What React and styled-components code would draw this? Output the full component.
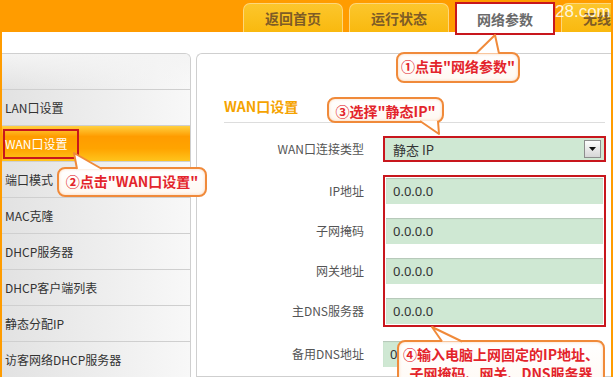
import styled, { createGlobalStyle } from "styled-components";

const GlobalStyle = createGlobalStyle`
  html, body {
    margin: 0;
    padding: 0;
    background: #fff;
  }
  body {
    font-family: "Noto Sans CJK SC", "Noto Sans", sans-serif;
  }
`;

const tabs = [
  { text: "返回首页" },
  { text: "运行状态" },
  { text: "网络参数", active: true },
  { text: "无线设置" },
];

const menu = [
  "LAN口设置",
  "WAN口设置",
  "端口模式",
  "MAC克隆",
  "DHCP服务器",
  "DHCP客户端列表",
  "静态分配IP",
  "访客网络DHCP服务器",
];

const ipFields = ["IP地址", "子网掩码", "网关地址", "主DNS服务器"];

function Callout({ top, left, width, height, tail, children }) {
  return (
    <CalloutBox style={{ top, left, width, height }}>
      {children}
      <TailSvg width="1" height="1">
        <path d={tail} fill="#fff" stroke="#f08a3a" strokeWidth="2" strokeLinejoin="round" />
      </TailSvg>
    </CalloutBox>
  );
}

function App() {
  return (
    <Page>
      <GlobalStyle />
      <TopBar>
        {tabs.map((t) => (
          <Tab key={t.text} $active={t.active}>
            {t.text}
          </Tab>
        ))}
        <Watermark>28.com</Watermark>
      </TopBar>

      <Body>
        <Sidebar>
          <SideHead />
          {menu.map((m) => (
            <MenuItem key={m} $active={m === "WAN口设置"}>
              {m === "WAN口设置" ? <Marked>{m}</Marked> : m}
            </MenuItem>
          ))}
        </Sidebar>

        <Panel>
          <Heading>WAN口设置</Heading>
          <Form>
            <Row>
              <Label>WAN口连接类型</Label>
              <Select>
                静态 IP
                <DropBtn>
                  <svg width="7" height="4" viewBox="0 0 7 4">
                    <path d="M0 0h7L3.5 4z" fill="#111" />
                  </svg>
                </DropBtn>
              </Select>
            </Row>
            <Group>
              <GroupLabels>
                {ipFields.map((f) => (
                  <Label key={f}>{f}</Label>
                ))}
              </GroupLabels>
              <RedBox>
                {ipFields.map((f) => (
                  <Field key={f}>0.0.0.0</Field>
                ))}
              </RedBox>
            </Group>
            <Row>
              <Label>备用DNS地址</Label>
              <Field $plain>0.0.0.0</Field>
            </Row>
          </Form>
        </Panel>
      </Body>

      <Callout top={52} left={394} width={124} height={31} tail="M80 1.5 L99 -17 L103 1.5">
        ①点击"网络参数"
      </Callout>
      <Callout top={167} left={55} width={150} height={30} tail="M20 2 L17 -14 L45 2">
        ②点击"WAN口设置"
      </Callout>
      <Callout top={97} left={325} width={117} height={26} tail="M93 24 L112 37 L111 24">
        ③选择"静态IP"
      </Callout>
      <Callout top={340} left={395} width={208} height={60} tail="M45 1.5 L35 -13 L65 1.5">
        ④输入电脑上网固定的IP地址、
        <br />
        子网掩码、网关、DNS服务器
      </Callout>
    </Page>
  );
}

const Page = styled.div`
  position: relative;
  width: 613px;
  height: 377px;
  overflow: hidden;
  background: #fff;
  box-sizing: border-box;
  border-left: 2px solid #ff9c00;
  border-right: 2px solid #ff9c00;
`;

const TopBar = styled.div`
  position: relative;
  height: 32px;
  background: #ff9c00;
  display: flex;
  align-items: flex-end;
  gap: 6px;
  padding-left: 241px;
`;

const Tab = styled.div`
  position: relative;
  z-index: 1;
  flex: 0 0 auto;
  width: ${(p) => (p.$active ? "96px" : "98px")};
  height: ${(p) => (p.$active ? "29px" : "28px")};
  margin-bottom: ${(p) => (p.$active ? "-3px" : "0")};
  display: flex;
  align-items: center;
  justify-content: center;
  font-size: 14px;
  font-weight: 700;
  color: ${(p) => (p.$active ? "#6a6a6a" : "#7e5c26")};
  background: ${(p) => (p.$active ? "#fff" : "linear-gradient(#fcc62c, #f9b90f)")};
  border: ${(p) => (p.$active ? "2px solid #c8161d" : "1px solid #fdd77a")};
  border-bottom: ${(p) => (p.$active ? "2px solid #c8161d" : "none")};
  border-radius: ${(p) => (p.$active ? "0" : "7px 7px 0 0")};
`;

const Watermark = styled.span`
  position: absolute;
  left: 553px;
  top: 2px;
  z-index: 2;
  font-family: "Liberation Sans", sans-serif;
  font-size: 17px;
  color: rgba(255, 255, 255, 0.85);
`;

const Body = styled.div`
  display: flex;
  gap: 5px;
  padding-top: 21px;
  height: 324px;
`;

const Sidebar = styled.div`
  flex: 0 0 188px;
  border-top: 1px solid #cfcfcf;
  border-right: 1px solid #cfcfcf;
  border-top-right-radius: 6px;
  background: linear-gradient(to right, #e2e2e2, #f8f8f8);
  overflow: hidden;
`;

const SideHead = styled.div`
  height: 35px;
  border-bottom: 1px solid #cfcfcf;
  background: linear-gradient(to bottom, #f4f4f4, transparent);
`;

const MenuItem = styled.div`
  height: 35px;
  display: flex;
  align-items: center;
  padding-left: 3px;
  border-bottom: 1px solid #cfcfcf;
  font-size: 12px;
  color: ${(p) => (p.$active ? "#fff" : "#333")};
  background: ${(p) =>
    p.$active
      ? "linear-gradient(to bottom, #ffd040 0%, #ff9c00 30%, #ffa400 65%, #ffc41c 100%)"
      : "transparent"};
`;

const Marked = styled.span`
  margin-left: -2px;
  border: 2px solid #c8161d;
  padding: 4px 9px 5px 0;
`;

const Panel = styled.div`
  flex: 1;
  border: 1px solid #cfcfcf;
  border-right: none;
  border-top-left-radius: 6px;
  padding-left: 27px;
`;

const Heading = styled.div`
  height: 60px;
  padding-bottom: 8px;
  margin-right: 6px;
  display: flex;
  align-items: flex-end;
  border-bottom: 1px solid #dddddd;
  font-size: 14px;
  font-weight: 700;
  line-height: 16px;
  color: #f5a300;
`;

const Form = styled.div`
  display: flex;
  flex-direction: column;
  margin-top: 13px;
  gap: 14px;
`;

const Row = styled.div`
  display: flex;
  align-items: center;
  gap: 19px;
`;

const Label = styled.div`
  width: 140px;
  text-align: right;
  font-size: 12px;
  color: #555;
  height: 26px;
  line-height: 26px;
  flex: 0 0 auto;
`;

const Select = styled.div`
  height: 22px;
  width: 208px;
  border: 2px solid #c8161d;
  background: #cfe8d3;
  display: flex;
  align-items: center;
  justify-content: space-between;
  padding-left: 8px;
  padding-right: 3px;
  font-size: 13px;
  color: #333;
`;

const DropBtn = styled.div`
  width: 15px;
  height: 16px;
  border: 1px solid #8d8d8d;
  background: linear-gradient(#fdfdfd, #d6d6d6);
  display: flex;
  align-items: center;
  justify-content: center;
`;

const Group = styled.div`
  display: flex;
  gap: 19px;
  margin-top: -1px;
`;

const GroupLabels = styled.div`
  display: flex;
  flex-direction: column;
  gap: 14px;
  padding-top: 3px;
`;

const RedBox = styled.div`
  width: 217px;
  border: 2px solid #c8161d;
  display: flex;
  flex-direction: column;
  gap: 14px;
  padding: 1px;
`;

const Field = styled.div`
  height: 26px;
  line-height: 27px;
  box-sizing: border-box;
  width: ${(p) => (p.$plain ? "219px" : "auto")};
  background: #cfe8d3;
  box-shadow: inset 0 1px 1px #b4c6b7;
  padding-left: 7px;
  font-size: 13px;
  color: #333;
  font-family: "Noto Sans", sans-serif;
`;

const CalloutBox = styled.div`
  position: absolute;
  z-index: 5;
  box-sizing: border-box;
  border: 2px solid #f08a3a;
  border-radius: 8px;
  background: linear-gradient(#ffffff, #fff8f1);
  box-shadow: inset 0 0 3px rgba(240, 138, 58, 0.35);
  display: flex;
  align-items: flex-start;
  justify-content: center;
  padding-top: 3px;
  text-align: center;
  font-size: 14px;
  line-height: 19px;
  font-weight: 700;
  color: #e3242b;
  white-space: nowrap;
`;

const TailSvg = styled.svg`
  position: absolute;
  left: -2px;
  top: -2px;
  overflow: visible;
`;

export default App;
